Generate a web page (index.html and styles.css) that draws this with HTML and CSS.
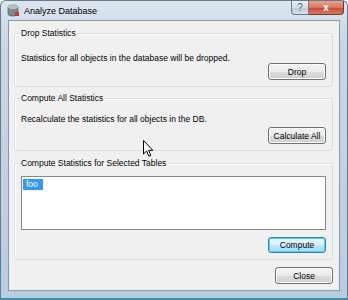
FILE: index.html
```html
<!DOCTYPE html>
<html>
<head>
	<link rel="stylesheet" href="styles.css">
	<title>Analyze Database</title>
</head>
<body>
	<div class="window">
		<div class="titlebar">
			<svg class="app-icon" width="13" height="13" viewBox="0 0 13 13">
				<ellipse cx="6" cy="3" rx="5" ry="2" fill="#9aa3ab" stroke="#5d666e" stroke-width="0.8"/>
				<path d="M1 3 V10 A5 2 0 0 0 11 10 V3" fill="#7d868e" stroke="#5d666e" stroke-width="0.8"/>
				<ellipse cx="6" cy="3" rx="5" ry="2" fill="#b8c0c6"/>
				<rect x="8" y="8" width="4" height="4" fill="#c23b2a"/>
			</svg>
			<span class="title">Analyze Database</span>
			<div class="caption-buttons">
				<span class="cap-help">?</span>
				<span class="cap-close">x</span>
			</div>
		</div>
		<div class="client">
			<fieldset class="group">
				<legend>Drop Statistics</legend>
				<div class="desc first">Statistics for all objects in the database will be dropped.</div>
				<div class="row"><button class="btn">Drop</button></div>
			</fieldset>
			<fieldset class="group">
				<legend>Compute All Statistics</legend>
				<div class="desc second">Recalculate the statistics for all objects in the DB.</div>
				<div class="row spaced"><button class="btn">Calculate All</button></div>
			</fieldset>
			<fieldset class="group last">
				<legend>Compute Statistics for Selected Tables</legend>
				<div class="listbox"><span class="item selected">foo</span></div>
				<div class="row"><button class="btn default">Compute</button></div>
			</fieldset>
			<div class="footer"><button class="btn">Close</button></div>
		</div>
		<svg class="pointer" width="12" height="18" viewBox="0 0 12 18">
			<path d="M0.5 0.5 V14 L3.6 11 L5.8 16.2 L7.8 15.3 L5.6 10.3 H9.8 Z" fill="#fff" stroke="#000" stroke-width="1"/>
		</svg>
	</div>
</body>
</html>
```

FILE: styles.css
```css
html, body {
	margin: 0;
	padding: 0
}

body {
	font-family: "Liberation Sans", Arial, sans-serif;
	font-size: 8.5px;
	color: #000;
	background: #fff
}

.window {
	position: relative;
	width: 348px;
	height: 300px;
	box-sizing: border-box;
	display: flex;
	flex-direction: column;
	padding: 0 7px 7px 7px;
	background: linear-gradient(to bottom, #dce6ef 0px, #c9d7e5 40px, #bfd0e1 200px, #b7cde2 100%);
	border: 1px solid #6c7a88;
	border-bottom: 2px solid #3f8fa6;
	border-radius: 6px 6px 0 0
}

.titlebar {
	height: 19px;
	display: flex;
	align-items: center;
	margin: 0 -7px 0 -6px
}

.app-icon {
	margin: 0 4px 0 5px
}

.title {
	font-size: 9px;
	color: #000
}

.caption-buttons {
	margin-left: auto;
	align-self: flex-start;
	display: flex;
	margin-right: 3px
}

.cap-help, .cap-close {
	height: 14px;
	line-height: 13px;
	text-align: center;
	font-size: 10px;
	font-weight: bold;
	color: #fff;
	box-sizing: border-box
}

.cap-help {
	width: 18px;
	color: #55636f;
	font-weight: normal;
	background: linear-gradient(to bottom, #eef3f7, #cfdbe5 50%, #bccbd8 51%, #d5e0ea);
	border: 1px solid #6d7d8c;
	border-top: none;
	border-radius: 0 0 0 4px
}

.cap-close {
	width: 35px;
	background: linear-gradient(to bottom, #e8a493, #d47560 50%, #c24a35 51%, #d9785e);
	border: 1px solid #6a3a30;
	border-left: none;
	border-top: none;
	border-radius: 0 0 4px 0
}

.client {
	flex: 1;
	background: #f0f0f0;
	border: 1px solid #8c9aa8;
	display: flex;
	flex-direction: column;
	padding: 7px 6px 0 5px
}

.group {
	margin: 0 0 6px 0;
	padding: 0 6px 6px 6px;
	border: 1px solid #d5dfe5;
	border-radius: 3px;
	box-shadow: inset 1px 1px 0 #fff
}

.group.last {
	margin-top: 1px
}

.group legend {
	padding: 0 2px 0 0;
	line-height: 11px;
	color: #000
}

.desc {
	line-height: 10px;
	white-space: nowrap
}

.desc.first {
	margin-top: 14px
}

.desc.second {
	margin-top: 10px
}

.row {
	display: flex;
	justify-content: flex-end
}

.row.spaced {
	margin-top: 3px
}

.btn {
	font-family: "Liberation Sans", Arial, sans-serif;
	font-size: 8.5px;
	width: 58px;
	height: 17px;
	padding: 0;
	color: #000;
	border: 1px solid #707070;
	border-radius: 3px;
	background: linear-gradient(to bottom, #f2f2f2 0%, #ebebeb 50%, #dddddd 51%, #cfcfcf 100%);
	box-shadow: inset 0 0 0 1px #fcfcfc
}

.btn.default {
	height: 16px;
	border-color: #3c7fb1;
	box-shadow: inset 0 0 0 1px #48d4f8;
	background: linear-gradient(to bottom, #eaf6fd 0%, #d9f0fc 50%, #bee6fd 51%, #a7d9f5 100%)
}

.listbox {
	box-sizing: border-box;
	height: 54px;
	margin: 7px 0 7px 0;
	background: #fff;
	border: 1px solid #828790;
	padding: 2px 0 0 1px
}

.item {
	display: inline-block;
	padding: 0 5px 0 3px;
	line-height: 11px
}

.item.selected {
	background: #3399ff;
	color: #fff
}

.footer {
	margin-top: 1px;
	display: flex;
	justify-content: flex-end
}

.pointer {
	position: absolute;
	left: 142px;
	top: 139px
}
```
